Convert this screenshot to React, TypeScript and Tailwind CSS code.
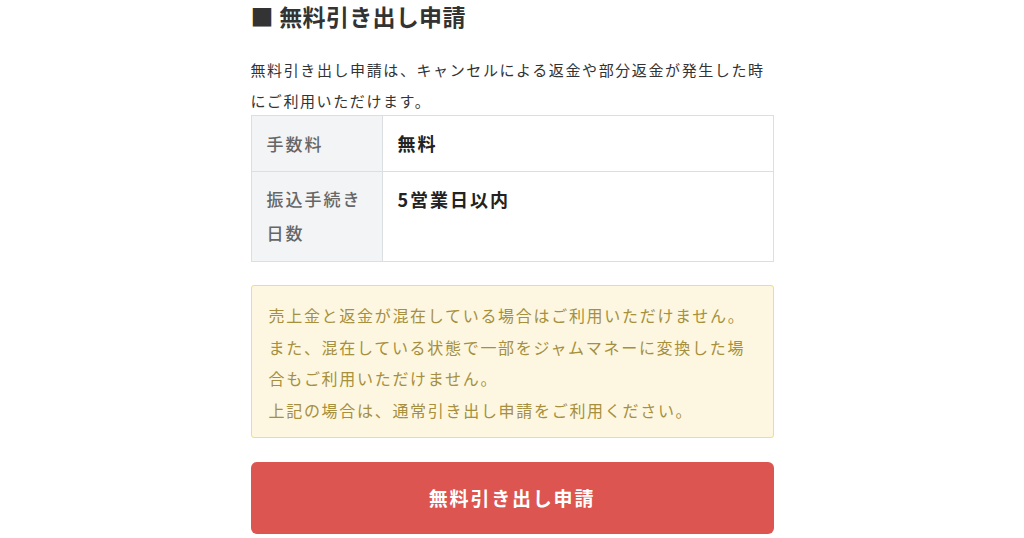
export default function App() {
  return (
    <div
      className="min-h-screen bg-white"
      style={{ fontFamily: '"Noto Sans CJK JP", "Noto Sans", sans-serif' }}
    >
      <div className="mx-auto w-[523px]">
        <h2 className="text-[23px] leading-[32px] font-bold text-[#333] tracking-[0.3px]">
          ■ 無料引き出し申請
        </h2>

        <p className="mt-[22px] text-[15px] leading-[31px] tracking-[1.6px] text-[#333]">
          無料引き出し申請は、キャンセルによる返金や部分返金が発生した時
          <br />
          にご利用いただけます。
        </p>

        <table className="-mt-[1px] w-full border-collapse border border-[#dcdfe2]">
          <tbody>
            <tr className="h-[56px]">
              <th className="w-[131px] border border-[#dcdfe2] bg-[#f3f4f5] px-[15px] text-left align-middle text-[17px] font-medium tracking-[2px] text-[#666]">
                手数料
              </th>
              <td className="border border-[#dcdfe2] px-[15px] align-middle text-[18px] font-bold tracking-[2px] text-[#222]">
                無料
              </td>
            </tr>
            <tr className="h-[90px]">
              <th className="border border-[#dcdfe2] bg-[#f3f4f5] px-[15px] pt-[10px] pb-[10px] text-left align-top text-[17px] leading-[34px] font-medium tracking-[2px] text-[#666]">
                振込手続き
                <br />
                日数
              </th>
              <td className="border border-[#dcdfe2] px-[15px] pt-[10px] align-top text-[18px] leading-[34px] font-bold tracking-[2px] text-[#222]">
                5営業日以内
              </td>
            </tr>
          </tbody>
        </table>

        <div className="mt-[23px] rounded-[3px] border border-[#eedc8f] bg-[#fdf7e1] px-[17px] pt-[14px] pb-[11px] text-[16px] leading-[31.5px] tracking-[1.7px] text-[#a68f3d]">
          売上金と返金が混在している場合はご利用いただけません。
          <br />
          また、混在している状態で一部をジャムマネーに変換した場
          <br />
          合もご利用いただけません。
          <br />
          上記の場合は、通常引き出し申請をご利用ください。
        </div>

        <button
          type="button"
          className="mt-[24px] flex h-[72px] w-full items-center justify-center rounded-[6px] bg-[#dc5550] text-[19px] font-bold tracking-[1.8px] text-white"
        >
          無料引き出し申請
        </button>
      </div>
    </div>
  );
}
